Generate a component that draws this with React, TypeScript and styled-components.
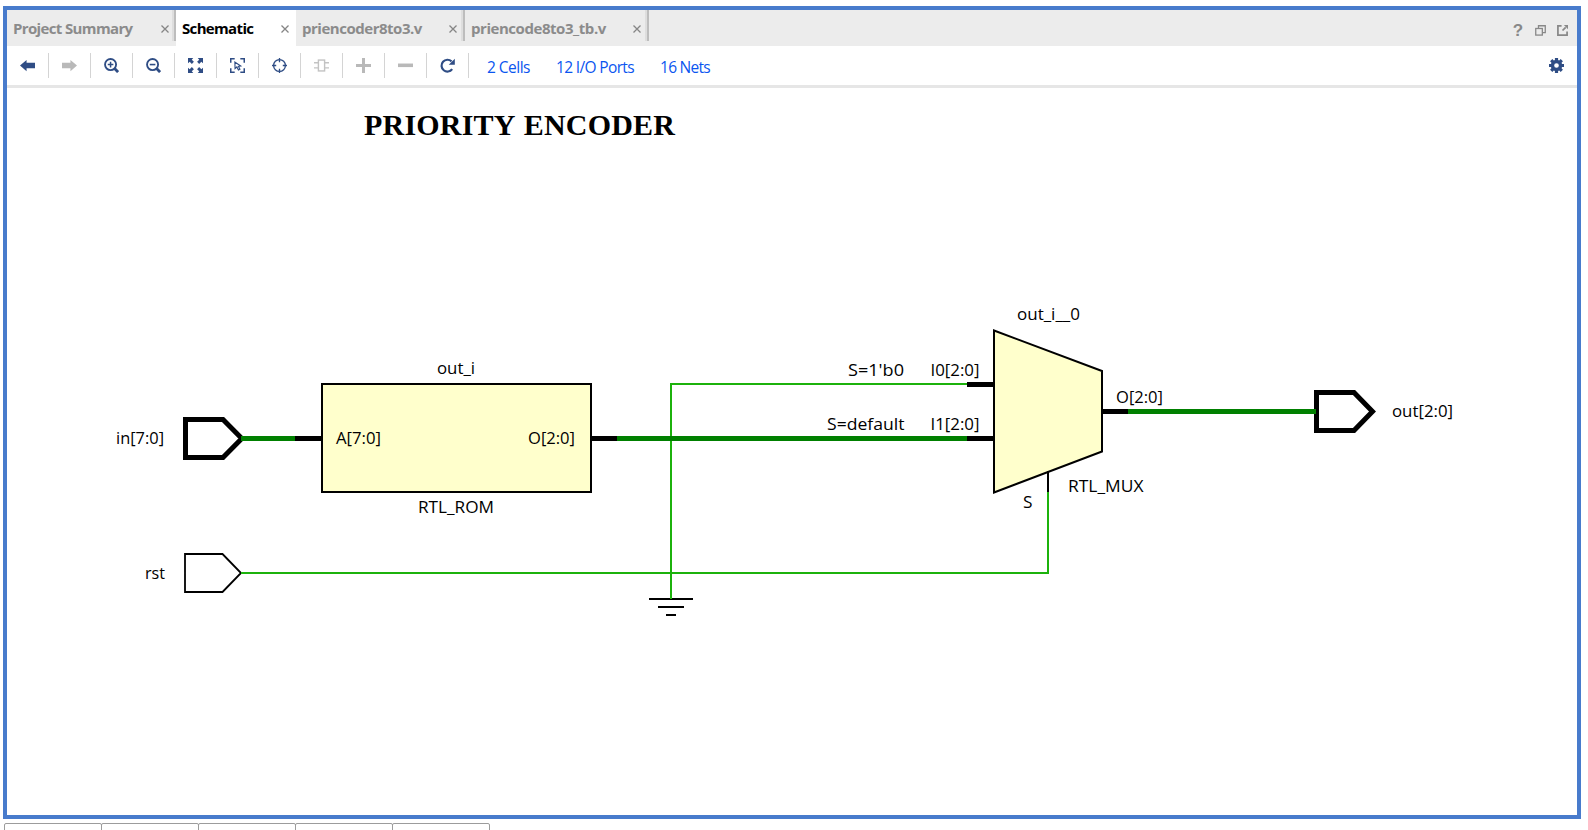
import React from "react";
import styled, { createGlobalStyle } from "styled-components";

const NAVY = "#2f4d85";
const GREY = "#b9b9b9";
const BUS = "#008000";
const WIRE = "#1cb20c";

const GlobalStyle = createGlobalStyle`
  html, body { margin: 0; padding: 0; background: #fff; overflow: hidden; }
  body { font-family: "Open Sans", "Noto Sans", sans-serif; }
`;

const Page = styled.div`
  box-sizing: border-box;
  width: 1588px;
  height: 830px;
  padding: 6px 0 0 3px;
  overflow: hidden;
  display: flex;
  flex-direction: column;
`;

const Window = styled.main`
  box-sizing: border-box;
  flex: none;
  width: 1578px;
  height: 813px;
  border: 4px solid #487bcc;
  display: flex;
  flex-direction: column;
`;

const TabBar = styled.div`
  flex: none;
  height: 36px;
  background: #ececec;
  display: flex;
`;

const Tab = styled.div<{ $width: number; $active?: boolean; $divided?: boolean }>`
  box-sizing: border-box;
  width: ${(p) => p.$width}px;
  height: 36px;
  padding: 0 7px 0 6px;
  display: flex;
  align-items: center;
  justify-content: space-between;
  background: ${(p) =>
    p.$active
      ? "#fff"
      : p.$divided
      ? "linear-gradient(90deg, #dedede 50%, #bdbdbd 50%) right top / 4px 31px no-repeat"
      : "transparent"};
  color: ${(p) => (p.$active ? "#000" : "#8b8b8b")};
`;

const TabLabel = styled.span<{ $spacing: number }>`
  font-size: 15px;
  font-weight: 700;
  line-height: 36px;
  white-space: nowrap;
  letter-spacing: ${(p) => p.$spacing}px;
`;

const CloseIcon = styled.svg<{ $shift: number }>`
  flex: none;
  width: 8px;
  height: 8px;
  margin: 2px ${(p) => p.$shift}px 0 0;
`;

const WindowButtons = styled.div`
  margin-left: auto;
  padding: 5px 9px 0 0;
  display: flex;
  align-items: center;
  gap: 11px;
`;

const HelpMark = styled.span`
  width: 12px;
  text-align: center;
  font: 700 17px/18px "Liberation Sans", sans-serif;
  color: #888;
`;

const Toolbar = styled.div`
  flex: none;
  box-sizing: border-box;
  height: 42px;
  border-bottom: 3px solid #e6e6e6;
  display: flex;
  align-items: center;
`;

const ToolButton = styled.div`
  box-sizing: border-box;
  width: 42px;
  height: 25px;
  border-right: 1px solid #d4d4d4;
  display: flex;
  align-items: center;
  justify-content: center;
`;

const ToolSvg = styled.svg`
  display: block;
  width: 15px;
  height: 15px;
`;

const Stats = styled.nav`
  display: flex;
  padding-left: 18px;
`;

const StatLink = styled.a<{ $width: number; $spacing: number }>`
  width: ${(p) => p.$width}px;
  font-size: 15.5px;
  line-height: 22px;
  padding-top: 2px;
  white-space: nowrap;
  letter-spacing: ${(p) => p.$spacing}px;
  color: #0a55f0;
`;

const Settings = styled.div`
  margin-left: auto;
  padding-right: 13px;
`;

const Canvas = styled.svg`
  display: block;
  flex: none;
  width: 1570px;
  height: 727px;
`;

const BottomTabs = styled.div`
  display: flex;
  padding: 4px 0 0 1px;
`;

const BottomTab = styled.div`
  box-sizing: border-box;
  width: 98px;
  height: 12px;
  margin-right: -1px;
  border: 1px solid #9c9c9c;
  border-radius: 2px;
`;

const Close = ({ shift = 0 }: { shift?: number }) => (
  <CloseIcon $shift={shift} viewBox="0 0 8 8">
    <path d="M.5 .5L7.5 7.5M7.5 .5L.5 7.5" stroke="#858585" strokeWidth="1.3" />
  </CloseIcon>
);

const tabs = [
  { label: "Project Summary", width: 169, spacing: -0.64, divided: true, shift: 0 },
  { label: "Schematic", width: 120, spacing: -0.66, active: true, shift: 0 },
  { label: "priencoder8to3.v", width: 169, spacing: -0.48, divided: true, shift: 1 },
  { label: "priencode8to3_tb.v", width: 184, spacing: -0.45, divided: true, shift: 1 },
];

const arrow = "M0 8L7 2V5.1H16V10.9H7V14Z";

const tools: React.ReactNode[] = [
  <path d={arrow} fill={NAVY} />,
  <path d={arrow} fill={GREY} transform="translate(16 0) scale(-1 1)" />,
  <g fill="none" stroke={NAVY}>
    <circle cx="7" cy="7" r="5.9" strokeWidth="2" />
    <path d="M4 7H10M7 4V10" strokeWidth="1.6" />
    <path d="M11.3 11.3L15 15" strokeWidth="3" />
  </g>,
  <g fill="none" stroke={NAVY}>
    <circle cx="7" cy="7" r="5.9" strokeWidth="2" />
    <path d="M4 7H10" strokeWidth="1.7" />
    <path d="M11.3 11.3L15 15" strokeWidth="3" />
  </g>,
  <g fill={NAVY}>
    {[0, 90, 180, 270].map((a) => (
      <path key={a} transform={`rotate(${a} 8 8)`} d="M0 0H5.6L4 1.8L6.3 4.1L4.1 6.3L1.8 4L0 5.6Z" />
    ))}
  </g>,
  <g fill="none" stroke={NAVY} strokeWidth="1.6">
    <path d="M.8 5V.8H5M11 .8H15.2V5M15.2 11V15.2H11M5 15.2H.8V11" />
    <path d="M5.2 4.3L5.4 11.2L7.3 9.6L9 12.8L10.6 12L9 8.9L11.4 8.5Z" strokeWidth="1.2" />
  </g>,
  <g fill="none" stroke={NAVY} strokeWidth="1.4">
    <circle cx="8" cy="8" r="6.3" />
    <path d="M8 0V4.5M8 11.5V16M0 8H4.5M11.5 8H16" />
  </g>,
  <g fill="none" stroke="#c3c3c3" strokeWidth="1.5">
    <rect x="4.7" y="2.2" width="6.6" height="11.6" />
    <path d="M0 5H4.7M0 10.5H4.7M11.3 5H16M11.3 10.5H16" />
  </g>,
  <path d="M8 0V16M0 8H16" stroke={GREY} strokeWidth="3.2" />,
  <path d="M0 7.8H16" stroke={GREY} strokeWidth="3.8" />,
  <g>
    <path d="M13 11.9A6.3 6.3 0 1 1 12.3 3.6" fill="none" stroke={NAVY} strokeWidth="2.3" />
    <path d="M15.8 .8V7.2H9.3Z" fill={NAVY} />
  </g>,
];

const stats = [
  { label: "2 Cells", width: 69, spacing: -0.52 },
  { label: "12 I/O Ports", width: 104, spacing: -0.65 },
  { label: "16 Nets", width: 60, spacing: -0.73 },
];

type Label = [text: string, x: number, baseline: number, width: number];
const labels: Label[] = [
  ["in[7:0]", 116, 444, 48],
  ["rst", 145, 579, 20],
  ["A[7:0]", 336, 444, 45],
  ["O[2:0]", 528, 444, 47],
  ["out_i", 437, 374, 38],
  ["RTL_ROM", 418, 513, 76],
  ["S=1'b0", 848, 376, 56],
  ["I0[2:0]", 930.5, 376, 49],
  ["S=default", 827, 430, 77.5],
  ["I1[2:0]", 930.5, 430, 49],
  ["out_i__0", 1017, 320, 63],
  ["O[2:0]", 1116, 403, 47],
  ["RTL_MUX", 1068, 492, 75.5],
  ["S", 1023, 508, 9.5],
  ["out[2:0]", 1392, 417, 61],
];

const Schematic = () => (
  <Canvas viewBox="7 88 1570 727">
    <text
      x="364"
      y="135"
      textLength="311"
      fontFamily="Liberation Serif, serif"
      fontWeight="700"
      fontSize="30"
      wordSpacing="1.5"
    >
      PRIORITY ENCODER
    </text>

    <g fill="#ffffcc" stroke="#000" strokeWidth="2">
      <rect x="322" y="384" width="269" height="108" />
      <path d="M994 330.5L1102 371V451.5L994 492.5Z" />
    </g>

    <g fill="#fff" stroke="#000">
      <path d="M185.5 419.5H223L241.8 438.5L223 457.5H185.5Z" strokeWidth="5" />
      <path d="M185 554H222.5L241 573L222.5 592H185Z" strokeWidth="1.8" />
      <path d="M1316.5 392.5H1354L1372.5 411.5L1354 430.5H1316.5Z" strokeWidth="5" />
    </g>

    <g fill="none" stroke={WIRE} strokeWidth="2">
      <path d="M967 384H671V598" />
      <path d="M241 573H1048V492" />
    </g>
    <path d="M241 438.5H295M617 438.5H967M1128 411.5H1316" stroke={BUS} strokeWidth="5" />
    <path
      d="M295 438.5H321M592 438.5H617M967 438.5H993M967 384.5H993M1103 411.5H1128"
      stroke="#000"
      strokeWidth="5"
    />
    <path d="M1048 471V492M649 599H693M658 607H684M666 615H676" stroke="#000" strokeWidth="2" />
    <path d="M671 596V599" stroke={WIRE} strokeWidth="2" />

    <g fontSize="17" fill="#000">
      {labels.map(([text, x, y, width]) => (
        <text key={`${x}-${y}`} x={x} y={y} textLength={width} lengthAdjust="spacingAndGlyphs">
          {text}
        </text>
      ))}
    </g>
  </Canvas>
);

export default function App() {
  return (
    <Page>
      <GlobalStyle />
      <Window>
        <TabBar>
          {tabs.map((t) => (
            <Tab key={t.label} $width={t.width} $active={t.active} $divided={t.divided}>
              <TabLabel $spacing={t.spacing}>{t.label}</TabLabel>
              <Close shift={t.shift} />
            </Tab>
          ))}
          <WindowButtons>
            <HelpMark>?</HelpMark>
            <svg width="11" height="11" viewBox="0 0 12 12" fill="none" stroke="#888" strokeWidth="1.4">
              <path d="M3.8 3.5V.8H11.2V8.2H8.3" />
              <rect x=".8" y="3.8" width="7.2" height="7.2" />
            </svg>
            <svg width="11" height="11" viewBox="0 0 12 12" fill="none" stroke="#888" strokeWidth="1.9">
              <path d="M5 1H1V11H11V7M6 6L9.5 2.5" />
              <path d="M7.5 0H12V4.5Z" fill="#888" stroke="none" />
            </svg>
          </WindowButtons>
        </TabBar>
        <Toolbar>
          {tools.map((icon, i) => (
            <ToolButton key={i}>
              <ToolSvg viewBox="0 0 16 16">{icon}</ToolSvg>
            </ToolButton>
          ))}
          <Stats>
            {stats.map((s) => (
              <StatLink key={s.label} $width={s.width} $spacing={s.spacing}>
                {s.label}
              </StatLink>
            ))}
          </Stats>
          <Settings>
            <ToolSvg viewBox="0 0 16 16">
              <circle cx="8" cy="8" r="4.3" fill="none" stroke={NAVY} strokeWidth="3.6" />
              {[0, 45, 90, 135].map((a) => (
                <path
                  key={a}
                  d="M8 0V3.2M8 12.8V16"
                  stroke={NAVY}
                  strokeWidth="3.4"
                  transform={`rotate(${a} 8 8)`}
                />
              ))}
            </ToolSvg>
          </Settings>
        </Toolbar>
        <Schematic />
      </Window>
      <BottomTabs>
        {[0, 1, 2, 3, 4].map((i) => (
          <BottomTab key={i} />
        ))}
      </BottomTabs>
    </Page>
  );
}
